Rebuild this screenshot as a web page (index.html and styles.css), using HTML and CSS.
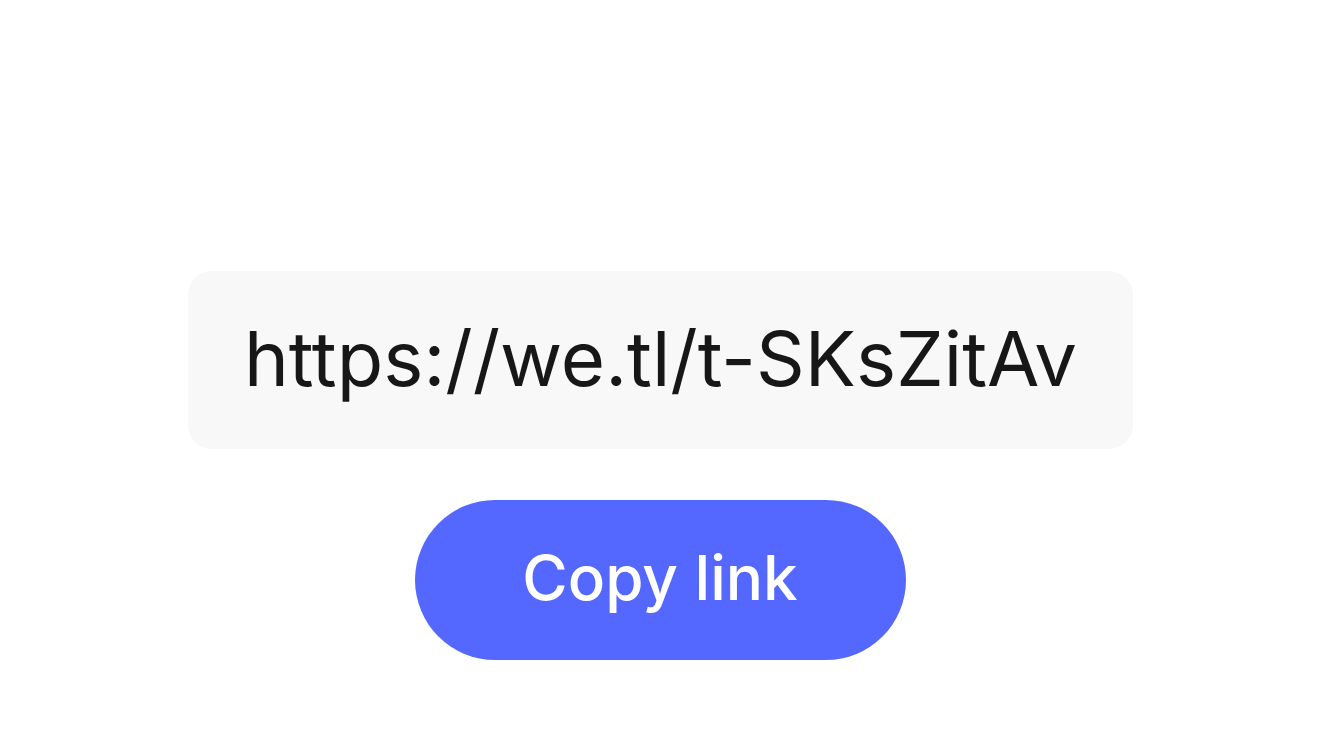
FILE: index.html
```html
<!DOCTYPE html>
<html lang="en">
<head>
<meta charset="utf-8">
<title>Copy link</title>
<link rel="stylesheet" href="styles.css">
</head>
<body>
<main class="page">
  <div class="link-box"><span class="link-text">https://we.tl/t-SKsZitAv</span></div>
  <button class="copy-btn" type="button">Copy link</button>
</main>
</body>
</html>
```
FILE: styles.css
```css
html, body {
  margin: 0;
  padding: 0;
  background: #ffffff;
}
.page {
  width: 1320px;
  height: 742px;
  box-sizing: border-box;
  padding-top: 271px;
  display: flex;
  flex-direction: column;
  align-items: center;
  font-family: Inter, "Noto Sans", sans-serif;
}
.link-box {
  width: 945px;
  height: 178px;
  margin-left: 1px;
  box-sizing: border-box;
  background: #f8f8f8;
  border-radius: 24px;
  display: flex;
  align-items: center;
  justify-content: center;
  padding-bottom: 4px;
}
.link-text {
  font-size: 76px;
  font-weight: 400;
  color: #171717;
  letter-spacing: 0;
  line-height: 1;
}
.copy-btn {
  margin-top: 51px;
  width: 491px;
  height: 160px;
  border: none;
  border-radius: 80px;
  background: #5468ff;
  color: #ffffff;
  font-family: Inter, "Noto Sans", sans-serif;
  font-size: 62px;
  font-weight: 500;
  padding: 0 0 6px 0;
  cursor: pointer;
}
```
